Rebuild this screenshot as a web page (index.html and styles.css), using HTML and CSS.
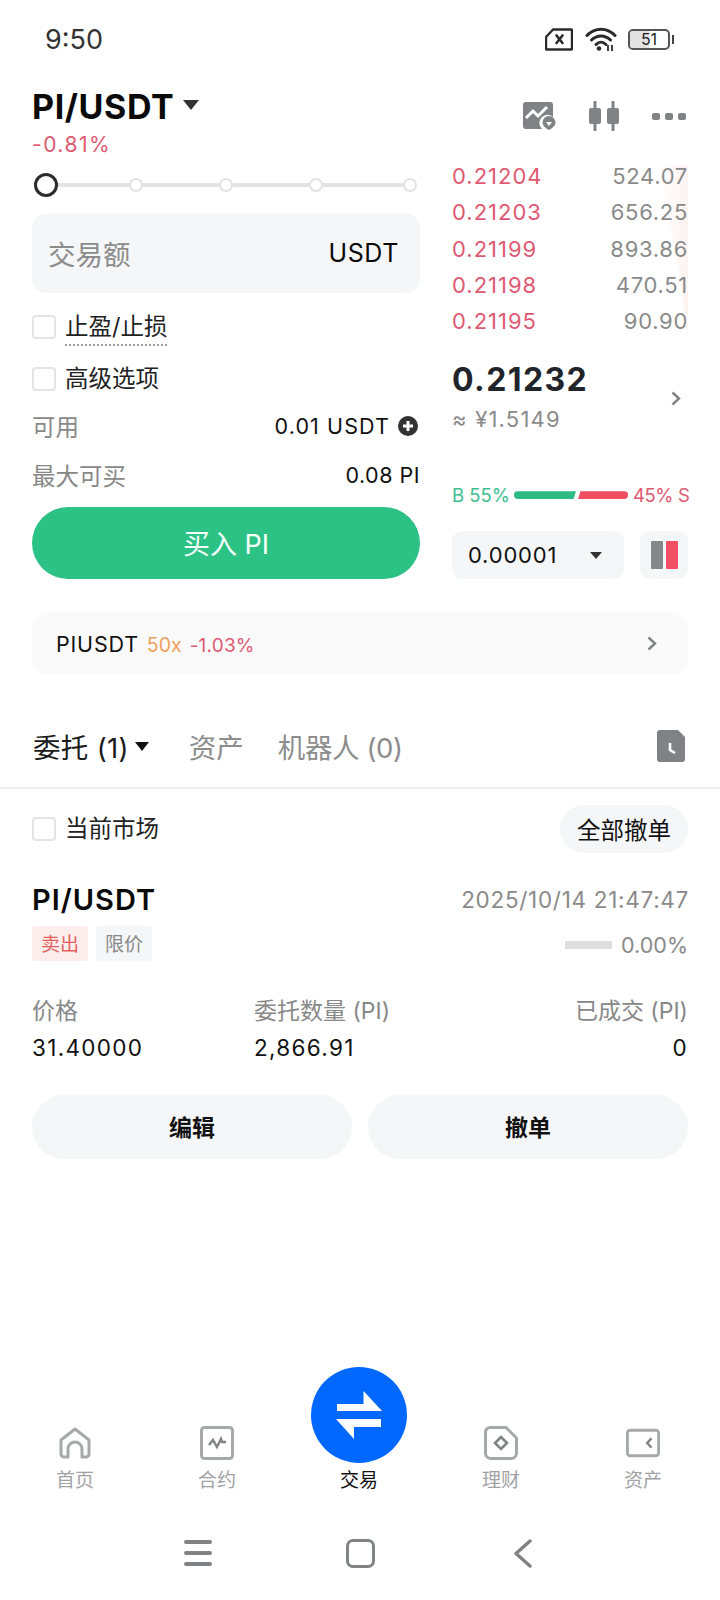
FILE: index.html
```html
<!DOCTYPE html>
<html lang="zh">
<head>
<meta charset="utf-8">
<title>PI/USDT</title>
<link rel="stylesheet" href="styles.css">
</head>
<body>
<div class="page">
  <div class="status">
    <span class="time">9:50</span>
    <div class="status-icons">
      <svg class="i-sim" viewBox="0 0 28 23"><path d="M8 1.500H26a1 1 0 0 1 1 1V20.500a1 1 0 0 1-1 1H2a1 1 0 0 1-1-1V9Z" fill="none" stroke="#2b2b2b" stroke-width="2.400" stroke-linejoin="round"/><path d="M11.500 7.500l6 7.500M17.500 7.500l-6 7.500" stroke="#2b2b2b" stroke-width="2.600" stroke-linecap="round"/></svg>
      <svg class="i-wifi" viewBox="0 0 32 26"><g fill="none" stroke="#2b2b2b" stroke-width="3" stroke-linecap="round"><path d="M2 9.500C10 1 22 1 30 9.500"/><path d="M6.500 14C12 8.500 20 8.500 25.500 14"/><path d="M11 18.500C14 15.500 18 15.500 21 18.500"/></g><circle cx="14" cy="22.500" r="2.300" fill="#2b2b2b"/><path d="M23 19v6M27 19v6" stroke="#2b2b2b" stroke-width="1.800"/></svg>
      <div class="battery"><span class="bat-fill"></span><span class="bat-num">51</span></div>
      <span class="bat-tip"></span>
    </div>
  </div>

  <div class="head">
    <div class="pair"><span class="pair-name">PI/USDT</span><span class="caret caret-lg"></span></div>
    <div class="head-icons">
      <svg class="i-chart" viewBox="0 0 33 28"><path d="M3 0H27a3 3 0 0 1 3 3V15a8 8 0 0 0-11 12H3a3 3 0 0 1-3-3V3a3 3 0 0 1 3-3Z" fill="#808285"/><path d="M3 16l7-7 5 5 9-9" fill="none" stroke="#fff" stroke-width="3"/><path d="M26 14a6.500 6.500 0 0 1 6.500 6.500c0 3-3 5.500-6.500 7.500-3.500-2-6.500-4.500-6.500-7.500A6.500 6.500 0 0 1 26 14Z" fill="#808285"/><path d="M23 20h6l-3 4Z" fill="#fff"/></svg>
      <svg class="i-candle" viewBox="0 0 30 30"><g fill="#808285"><rect x="0" y="7" width="12" height="16" rx="2"/><rect x="4.500" y="0" width="3" height="30" rx="1"/><rect x="18" y="7" width="12" height="16" rx="2"/><rect x="22.500" y="0" width="3" height="30" rx="1"/></g></svg>
      <div class="dots"><i></i><i></i><i></i></div>
    </div>
  </div>

  <div class="trade">
    <div class="left">
      <div class="pct">-0.81%</div>
      <div class="slider">
        <span class="knob"></span><span class="dot"></span><span class="dot"></span><span class="dot"></span><span class="dot dot-last"></span>
      </div>
      <div class="amount"><span class="amount-label">交易额</span><span class="amount-unit">USDT</span></div>
      <div class="check-row first"><span class="check"></span><span class="check-text dotted">止盈/止损</span></div>
      <div class="check-row second"><span class="check"></span><span class="check-text">高级选项</span></div>
      <div class="info-row avail">
        <span class="muted">可用</span>
        <span class="info-val">0.01 USDT <svg class="i-plus" viewBox="0 0 20 20"><circle cx="10" cy="10" r="10" fill="#333"/><path d="M10 5v10M5 10h10" stroke="#fff" stroke-width="3"/></svg></span>
      </div>
      <div class="info-row max"><span class="muted">最大可买</span><span class="info-val">0.08 PI</span></div>
      <div class="buy">买入 PI</div>
    </div>
    <div class="right">
      <div class="book">
        <div class="depth"></div>
        <div class="book-row"><span class="ask">0.21204</span><span class="qty">524.07</span></div>
        <div class="book-row"><span class="ask">0.21203</span><span class="qty">656.25</span></div>
        <div class="book-row"><span class="ask">0.21199</span><span class="qty">893.86</span></div>
        <div class="book-row"><span class="ask">0.21198</span><span class="qty">470.51</span></div>
        <div class="book-row"><span class="ask">0.21195</span><span class="qty">90.90</span></div>
      </div>
      <div class="last-wrap">
        <div>
          <div class="last">0.21232</div>
          <div class="approx">≈ ¥1.5149</div>
        </div>
        <svg class="i-chev i-chev-last" viewBox="0 0 10 15"><path d="M1.500 1.500L8 7.500L1.500 13.500" fill="none" stroke="#808285" stroke-width="2.400"/></svg>
      </div>
      <div class="ratio">
        <span class="ratio-b">B 55%</span>
        <span class="bar-b"></span><span class="bar-s"></span>
        <span class="ratio-s">45% S</span>
      </div>
      <div class="controls">
        <div class="select"><span class="select-val">0.00001</span><span class="caret caret-sm"></span></div>
        <div class="layout"><i class="lg"></i><i class="lr"></i></div>
      </div>
    </div>
  </div>

  <div class="perp">
    <div class="perp-text"><span class="perp-name">PIUSDT</span><span class="perp-lev">50x</span><span class="perp-pct">-1.03%</span></div>
    <svg class="i-chev" viewBox="0 0 10 15"><path d="M1.500 1.500L8 7.500L1.500 13.500" fill="none" stroke="#808285" stroke-width="2.400"/></svg>
  </div>

  <div class="tabs">
    <div class="tab active">委托 (1)<span class="caret caret-tab"></span></div>
    <div class="tab">资产</div>
    <div class="tab tab-bot">机器人 (0)</div>
    <svg class="i-doc" viewBox="0 0 28 32"><path d="M3 0H21L28 7V29a3 3 0 0 1-3 3H3a3 3 0 0 1-3-3V3a3 3 0 0 1 3-3Z" fill="#808285"/><path d="M13 13v7l5 3" fill="none" stroke="#fff" stroke-width="2.600"/></svg>
  </div>

  <div class="filter">
    <div class="filter-left"><span class="check"></span><span class="check-text">当前市场</span></div>
    <div class="cancel-all">全部撤单</div>
  </div>

  <div class="order-head">
    <span class="order-pair">PI/USDT</span>
    <span class="order-date">2025/10/14 21:47:47</span>
  </div>
  <div class="order-tags">
    <div class="tags"><span class="tag sell">卖出</span><span class="tag limit">限价</span></div>
    <div class="progress"><span class="progress-bar"></span><span class="progress-num">0.00%</span></div>
  </div>
  <div class="cols labels">
    <span>价格</span><span>委托数量 (PI)</span><span>已成交 (PI)</span>
  </div>
  <div class="cols values">
    <span>31.40000</span><span>2,866.91</span><span>0</span>
  </div>
  <div class="actions"><div class="act">编辑</div><div class="act">撤单</div></div>

  <div class="nav">
    <div class="nav-item">
      <svg class="nav-icon" viewBox="0 0 34 34"><path d="M3 14L17 3L31 14V28a3 3 0 0 1-3 3H24V23a7 7 0 0 0-14 0V31H6a3 3 0 0 1-3-3Z" fill="none" stroke="#a6a8aa" stroke-width="3" stroke-linejoin="round"/></svg>
      <span>首页</span>
    </div>
    <div class="nav-item">
      <svg class="nav-icon" viewBox="0 0 34 34"><rect x="1.500" y="1.500" width="31" height="31" rx="3" fill="none" stroke="#a6a8aa" stroke-width="3"/><path d="M9 19l4-5 4 7 4-8 1 3h4" fill="none" stroke="#808285" stroke-width="2.400"/></svg>
      <span>合约</span>
    </div>
    <div class="nav-item current">
      <div class="fab">
        <svg class="fab-icon" viewBox="0 0 46 48"><path d="M27.500 0L46 20H1V13H27.500Z" fill="#fff"/><path d="M0 28H45V36H18V48Z" fill="#fff"/></svg>
      </div>
      <span>交易</span>
    </div>
    <div class="nav-item">
      <svg class="nav-icon" viewBox="0 0 34 34"><path d="M6 1.500H22L32.500 12V27a5.500 5.500 0 0 1-5.500 5.500H7A5.500 5.500 0 0 1 1.500 27V6A4.500 4.500 0 0 1 6 1.500Z" fill="none" stroke="#a6a8aa" stroke-width="3"/><path d="M17 11l6 6-6 6-6-6Z" fill="none" stroke="#808285" stroke-width="2.600"/></svg>
      <span>理财</span>
    </div>
    <div class="nav-item">
      <svg class="nav-icon" viewBox="0 0 36 30"><rect x="1.500" y="1.500" width="33" height="27" rx="3" fill="none" stroke="#a6a8aa" stroke-width="3"/><path d="M27 10l-4.500 5 4.500 5" fill="none" stroke="#808285" stroke-width="2.600"/></svg>
      <span>资产</span>
    </div>
  </div>

  <div class="sys">
    <div class="sys-cell"><div class="burger"><i></i><i></i><i></i></div></div>
    <div class="sys-cell"><span class="square"></span></div>
    <div class="sys-cell"><svg class="sys-back" viewBox="0 0 19 29"><path d="M17 2L3 14.500L17 27" fill="none" stroke="#808285" stroke-width="3.400" stroke-linecap="round" stroke-linejoin="round"/></svg></div>
  </div>
</div>
</body>
</html>
```
FILE: styles.css
```css
* { box-sizing: border-box; }
html, body { margin: 0; padding: 0; background: #fff; }
body { font-family: Inter, "Noto Sans CJK SC", sans-serif; color: #111; }
.page { width: 720px; height: 1600px; display: flex; flex-direction: column; overflow: hidden; }

.status { height: 78px; display: flex; align-items: center; justify-content: space-between; padding: 0 46px 0 45px; }
.time { font-size: 27px; color: #333; }
.status-icons { display: flex; align-items: center; }
.i-sim { width: 28px; height: 23px; }
.i-wifi { width: 32px; height: 26px; margin-left: 12px; }
.battery { position: relative; width: 42px; height: 21px; margin-left: 11px; border: 2px solid #555; border-radius: 5px; display: flex; align-items: center; justify-content: center; overflow: hidden; }
.bat-fill { position: absolute; left: 0; top: 0; bottom: 0; width: 50%; background: #e2e2e2; }
.bat-num { position: relative; font-size: 16px; color: #222; line-height: 1; }
.bat-tip { width: 2px; height: 9px; margin-left: 2px; background: #444; }

.head { height: 56px; display: flex; align-items: center; justify-content: space-between; padding: 0 34px 0 32px; }
.pair { display: flex; align-items: center; }
.pair-name { font-size: 34px; font-weight: 700; color: #0a0a0a; letter-spacing: 0.600px; }
.caret { width: 0; height: 0; border-left: 7px solid transparent; border-right: 7px solid transparent; border-top: 9px solid #333; }
.caret-lg { margin-left: 9px; margin-top: -2px; border-left-width: 8px; border-right-width: 8px; border-top-width: 10px; }
.head-icons { display: flex; align-items: center; padding-top: 20px; }
.i-chart { width: 33px; height: 28px; }
.i-candle { width: 30px; height: 30px; margin-left: 33px; }
.dots { display: flex; gap: 5px; margin-left: 33px; }
.dots i { width: 8px; height: 7px; border-radius: 2px; background: #808285; }

.trade { display: grid; grid-template-columns: 388px 236px; column-gap: 32px; padding-left: 32px; }
.pct { height: 22px; line-height: 22px; font-size: 21px; color: #de5a72; letter-spacing: 1.500px; }
.slider { position: relative; height: 24px; margin-top: 17px; padding-left: 2px; display: flex; align-items: center; }
.slider::before { content: ""; position: absolute; left: 12px; right: 8px; top: 10px; height: 4px; background: #e4e4e4; }
.knob { position: relative; width: 24px; height: 24px; border: 3.500px solid #2b2b2b; border-radius: 50%; background: #fff; flex: none; }
.dot { position: relative; width: 14px; height: 14px; margin-left: 76px; border: 2px solid #e2e2e2; border-radius: 50%; background: #fff; flex: none; }
.knob + .dot { margin-left: 71px; }
.dot-last { margin-left: 80px; }
.amount { height: 79px; margin-top: 17px; padding: 0 21px 2px 16px; background: #f5f6f8; border-radius: 14px; display: flex; align-items: center; justify-content: space-between; }
.amount-label { font-size: 27.500px; color: #8c8c8c; }
.amount-unit { font-size: 25px; color: #0a0a0a; letter-spacing: 0.600px; }
.check-row { height: 24px; display: flex; align-items: center; }
.check-row.first { margin-top: 22px; }
.check-row.second { margin-top: 28px; }
.check { width: 24px; height: 24px; border: 2px solid #e4e4e4; border-radius: 4px; margin-right: 9px; flex: none; background: #fff; }
.check-text { font-size: 23.500px; color: #222; line-height: 24px; }
.dotted { position: relative; }
.dotted::after { content: ""; position: absolute; left: 0; right: 0; top: 29px; border-bottom: 2px dotted #999; }
.info-row { height: 28px; display: flex; align-items: center; justify-content: space-between; }
.info-row.avail { margin-top: 21px; }
.info-row.max { margin-top: 21px; }
.muted { font-size: 23.500px; color: #888; }
.info-val { display: flex; align-items: center; gap: 8px; font-size: 21.500px; color: #111; letter-spacing: 1.100px; }
.info-row.avail .info-val { padding-right: 2px; }
.info-row.max .info-val { letter-spacing: 0.500px; }
.i-plus { width: 20px; height: 20px; }
.buy { height: 72px; margin-top: 18px; padding-bottom: 2px; border-radius: 36px; background: #2dc285; color: #f4fff9; font-size: 27px; display: flex; align-items: center; justify-content: center; }

.right { padding-top: 24px; }
.book { position: relative; }
.depth { position: absolute; right: 0; top: 7px; width: 30px; height: 175px; background: linear-gradient(90deg, #fff, #fdf3f1); clip-path: polygon(0 0, 100% 0, 100% 100%, 70% 60%); }
.book-row { position: relative; height: 36.250px; display: flex; align-items: center; justify-content: space-between; font-size: 22px; letter-spacing: 1px; }
.ask { color: #de5a72; }
.qty { color: #8a8a8a; letter-spacing: 0.700px; }
.last-wrap { margin-top: 21px; display: flex; align-items: center; justify-content: space-between; padding-right: 7px; }
.last { height: 40px; line-height: 40px; font-size: 32px; font-weight: 700; color: #21242a; letter-spacing: 1.400px; }
.approx { height: 26px; line-height: 26px; margin-top: 6px; font-size: 22px; color: #8a8a8a; letter-spacing: 1.200px; }
.i-chev { width: 10px; height: 15px; flex: none; }
.i-chev-last { margin-top: 4px; }
.ratio { height: 24px; margin-top: 51px; display: flex; align-items: center; font-size: 18.500px; white-space: nowrap; }
.ratio-b { color: #41bd92; flex: none; }
.ratio-s { color: #de5a72; margin-left: 5px; flex: none; letter-spacing: -0.400px; }
.bar-b { flex: none; width: 62px; height: 8px; margin-left: 4px; background: #2dbb85; border-radius: 4px 0 0 4px; clip-path: polygon(0 0, 100% 0, 96% 100%, 0 100%); }
.bar-s { flex: none; width: 50px; height: 8px; margin-left: 2px; background: #ee4e60; border-radius: 0 4px 4px 0; clip-path: polygon(5% 0, 100% 0, 100% 100%, 0 100%); }
.controls { margin-top: 24px; display: flex; justify-content: space-between; }
.select { width: 172px; height: 48px; padding: 0 22px 0 16px; border-radius: 10px; background: #f5f6f8; display: flex; align-items: center; justify-content: space-between; font-size: 22px; color: #111; }
.select-val { letter-spacing: 0.800px; }
.caret-sm { border-left-width: 6px; border-right-width: 6px; border-top-width: 7px; }
.layout { width: 48px; height: 48px; border-radius: 10px; background: #f5f6f8; display: flex; align-items: center; justify-content: center; gap: 3px; }
.layout i { width: 12px; height: 28px; border-radius: 1px; }
.lg { background: #85878a; }
.lr { background: #f24f62; }

.perp { height: 63px; margin: 33px 32px 0; padding: 0 31px 0 24px; border-radius: 16px; background: #fafafa; display: flex; align-items: center; justify-content: space-between; }
.perp-text { display: flex; align-items: baseline; }
.perp-name { font-size: 21.500px; color: #111; letter-spacing: 0.800px; }
.perp-lev { margin-left: 8px; font-size: 19.500px; color: #ee9f5c; }
.perp-pct { margin-left: 8px; font-size: 19px; color: #de5a72; letter-spacing: 0.200px; }

.tabs { margin-top: 48px; height: 66px; padding: 0 35px 18px 33px; border-bottom: 2px solid #eee; display: flex; align-items: center; }
.tab { font-size: 27.500px; color: #8c8c8c; margin-right: 34px; display: flex; align-items: center; white-space: nowrap; }
.tab.active { color: #1a1a1a; margin-right: 40px; letter-spacing: 0.300px; }
.tab-bot { letter-spacing: -0.400px; }
.caret-tab { margin-left: 6px; border-top-color: #111; }
.i-doc { width: 28px; height: 32px; margin-left: auto; }

.filter { margin-top: 16px; height: 48px; padding: 0 32px; display: flex; align-items: center; justify-content: space-between; }
.filter-left { display: flex; align-items: center; }
.cancel-all { height: 48px; padding: 0 17px; border-radius: 24px; background: #f5f6f8; font-size: 23.500px; color: #111; display: flex; align-items: center; }

.order-head { margin-top: 28px; height: 36px; padding: 0 32px; display: flex; align-items: center; justify-content: space-between; }
.order-pair { font-size: 29px; font-weight: 600; color: #0a0a0a; letter-spacing: 1px; }
.order-date { font-size: 22.500px; color: #8a8a8a; letter-spacing: 0.700px; margin-right: -1px; }
.order-tags { margin-top: 10px; height: 33px; padding: 0 32px; display: flex; align-items: center; justify-content: space-between; }
.tags { display: flex; gap: 8px; }
.tag { width: 56px; height: 35px; padding-bottom: 2px; border-radius: 3px; font-size: 19px; display: flex; align-items: center; justify-content: center; }
.sell { background: #fdeeee; color: #e4605c; }
.limit { background: #f5f6f8; color: #8a8a8a; }
.progress { display: flex; align-items: center; margin-top: 3px; }
.progress-bar { width: 47px; height: 8px; background: #dedede; }
.progress-num { margin-left: 9px; font-size: 21.500px; color: #8a8a8a; }
.cols { height: 28px; padding: 0 32px; display: grid; grid-template-columns: 222px 1fr auto; align-items: center; }
.labels { margin-top: 32px; font-size: 23px; color: #888; }
.values { margin-top: 13px; font-size: 22.500px; color: #111; letter-spacing: 1.300px; }
.actions { margin-top: 34px; padding: 0 32px; display: grid; grid-template-columns: 1fr 1fr; gap: 16px; }
.act { height: 64px; padding-bottom: 2px; border-radius: 32px; background: #f5f6f8; font-size: 23px; font-weight: 700; color: #111; display: flex; align-items: center; justify-content: center; }

.nav { margin-top: auto; padding-left: 4px; display: flex; align-items: flex-end; }
.nav-item { width: 142px; display: flex; flex-direction: column; align-items: center; font-size: 19px; color: #a0a2a4; }
.nav-item span { height: 26px; line-height: 26px; margin-top: 9px; }
.nav-icon { width: 34px; height: 34px; margin-bottom: -1px; }
.nav-item.current { color: #111; }
.nav-item.current span { margin-top: 5px; }
.fab { width: 96px; height: 96px; border-radius: 50%; background: #0068ff; display: flex; align-items: center; justify-content: center; }
.fab-icon { width: 46px; height: 48px; }

.sys { margin-top: 35px; margin-bottom: 23px; height: 48px; padding-left: 117px; display: grid; grid-template-columns: repeat(3, 162px); }
.sys-cell { display: flex; align-items: center; justify-content: center; }
.burger { width: 28px; height: 26px; display: flex; flex-direction: column; justify-content: space-between; }
.burger i { height: 4px; border-radius: 2px; background: #808285; }
.square { width: 29px; height: 29px; border: 3.500px solid #808285; border-radius: 7px; }
.sys-back { width: 19px; height: 29px; }
```
